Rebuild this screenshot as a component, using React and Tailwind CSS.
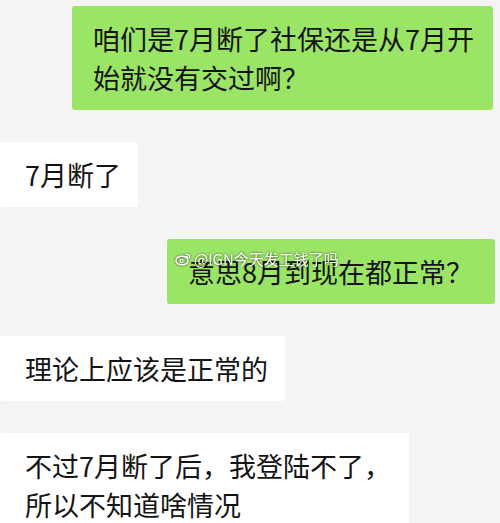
import React from 'react';

const font = { fontFamily: '"Microsoft YaHei", "Noto Sans CJK SC", "Noto Sans", sans-serif' };

const messages = [
  { side: 'right', text: '咱们是7月断了社保还是从7月开始就没有交过啊？', box: 'ml-[72px] mr-[7px]' },
  { side: 'left', text: '7月断了', box: 'w-[138px]' },
  { side: 'right', text: '意思8月到现在都正常？', box: 'ml-[167px] mr-[5px]', mark: true },
  { side: 'left', text: '理论上应该是正常的', box: 'w-[285px]' },
  { side: 'left', text: '不过7月断了后，我登陆不了，所以不知道啥情况', box: 'w-[409px]' },
];

const WeiboLogo = () => (
  <svg width="17" height="14" viewBox="0 0 17 14" fill="none">
    <ellipse cx="7" cy="8.5" rx="6" ry="4.3" stroke="#fff" strokeWidth="1.6" />
    <circle cx="6.5" cy="9" r="1.6" stroke="#fff" strokeWidth="1.2" />
    <path d="M11 2.5c2 -0.5 4 1 3.6 3.3" stroke="#fff" strokeWidth="1.4" strokeLinecap="round" />
    <path d="M11.2 4.6c1 -0.2 1.8 0.5 1.6 1.4" stroke="#fff" strokeWidth="1.2" strokeLinecap="round" />
  </svg>
);

export default function App() {
  return (
    <div className="h-[523px] w-[500px] overflow-hidden bg-[#f4f4f4] pt-[6px]" style={font}>
      <div className="flex flex-col gap-[32px]">
        {messages.map((m, i) => (
          <div
            key={i}
            className={`relative rounded-[3px] py-[13px] text-[27px] leading-[39px] text-[#141414] ${
              m.side === 'right' ? 'bg-[#9be566] pl-[21px] pr-[18px]' : 'bg-white pl-[25px] pr-[16px]'
            } ${m.box}`}
          >
            {m.text}
            {m.mark && (
              <div className="absolute left-[8px] top-[11px] flex items-center gap-[2px] text-[15px] leading-[18px] text-white [filter:drop-shadow(0_0_1px_rgba(0,0,0,0.7))]">
                <WeiboLogo />
                <span>@IGN今天发工钱了吗</span>
              </div>
            )}
          </div>
        ))}
      </div>
    </div>
  );
}
